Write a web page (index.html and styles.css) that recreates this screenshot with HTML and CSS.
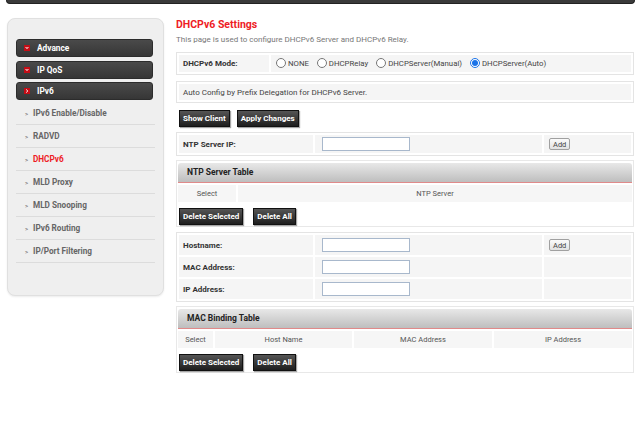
FILE: index.html
```html
<!DOCTYPE html>
<html lang="en">
<head>
    <meta charset="UTF-8">
    <title>DHCPv6 Settings</title>
    <link rel="stylesheet" href="styles.css">
</head>
<body>
    <div class="topbar"></div>
    <div class="page">
        <div class="sidebar">
            <div class="menu-btn">
                <svg class="menu-icon" viewBox="0 0 6 6"><rect width="6" height="6" fill="#c40d16"/><polyline points="1.6,2 3,3.6 4.4,2" fill="none" stroke="#fff" stroke-width="1"/></svg>
                Advance
            </div>
            <div class="menu-btn">
                <svg class="menu-icon" viewBox="0 0 6 6"><rect width="6" height="6" fill="#c40d16"/><polyline points="1.6,2 3,3.6 4.4,2" fill="none" stroke="#fff" stroke-width="1"/></svg>
                IP QoS
            </div>
            <div class="menu-btn">
                <svg class="menu-icon" viewBox="0 0 6 6"><rect width="6" height="6" fill="#c40d16"/><polyline points="2.2,1.5 3.8,3 2.2,4.5" fill="none" stroke="#fff" stroke-width="1"/></svg>
                IPv6
            </div>
            <ul class="submenu">
                <li>IPv6 Enable/Disable</li>
                <li>RADVD</li>
                <li class="active">DHCPv6</li>
                <li>MLD Proxy</li>
                <li>MLD Snooping</li>
                <li>IPv6 Routing</li>
                <li>IP/Port Filtering</li>
            </ul>
        </div>

        <div class="content">
            <h1>DHCPv6 Settings</h1>
            <p class="intro">This page is used to configure DHCPv6 Server and DHCPv6 Relay.</p>

            <table class="box mode-table">
                <tr>
                    <td class="label">DHCPv6 Mode:</td>
                    <td class="radios">
                        <label><input type="radio" name="mode">NONE</label>
                        <label><input type="radio" name="mode">DHCPRelay</label>
                        <label><input type="radio" name="mode">DHCPServer(Manual)</label>
                        <label><input type="radio" name="mode" checked>DHCPServer(Auto)</label>
                    </td>
                </tr>
            </table>

            <table class="box info-table">
                <tr><td>Auto Config by Prefix Delegation for DHCPv6 Server.</td></tr>
            </table>

            <div class="btn-row">
                <button class="btn">Show Client</button>
                <button class="btn">Apply Changes</button>
            </div>

            <table class="box form-table">
                <tr>
                    <td class="label">NTP Server IP:</td>
                    <td class="field"><input type="text"></td>
                    <td class="add"><button class="add-btn">Add</button></td>
                </tr>
            </table>

            <div class="list-box">
                <div class="list-head">NTP Server Table</div>
                <table class="list-table">
                    <tr><td class="sel-wide">Select</td><td>NTP Server</td></tr>
                </table>
                <div class="btn-row list-btns">
                    <button class="btn">Delete Selected</button>
                    <button class="btn">Delete All</button>
                </div>
            </div>

            <table class="box form-table host-table">
                <tr>
                    <td class="label">Hostname:</td>
                    <td class="field"><input type="text"></td>
                    <td class="add"><button class="add-btn">Add</button></td>
                </tr>
                <tr>
                    <td class="label">MAC Address:</td>
                    <td class="field"><input type="text"></td>
                    <td class="add"></td>
                </tr>
                <tr>
                    <td class="label">IP Address:</td>
                    <td class="field"><input type="text"></td>
                    <td class="add"></td>
                </tr>
            </table>

            <div class="list-box">
                <div class="list-head">MAC Binding Table</div>
                <table class="list-table">
                    <tr>
                        <td class="sel-narrow">Select</td>
                        <td class="col-host">Host Name</td>
                        <td class="col-mac">MAC Address</td>
                        <td>IP Address</td>
                    </tr>
                </table>
                <div class="btn-row list-btns">
                    <button class="btn">Delete Selected</button>
                    <button class="btn">Delete All</button>
                </div>
            </div>
        </div>
    </div>
</body>
</html>
```
FILE: styles.css
```css
body {
    margin: 0;
    font-family: Roboto, "Liberation Sans", Arial, sans-serif;
    color: #333;
    background: #fff;
}

.topbar {
    height: 3px;
    margin: 0 5px 0 6px;
    background: #3a3a3a;
    border: 1px solid #222;
    border-top: none;
    border-radius: 0 0 4px 4px;
}

.page {
    display: flex;
    gap: 12px;
    padding: 14px 6px 0 7px;
}

/* sidebar */
.sidebar {
    box-sizing: border-box;
    width: 157px;
    height: 278px;
    flex-shrink: 0;
    padding: 20px 10px 0 8px;
    background: #efefef;
    border: 1px solid #e0e0e0;
    border-radius: 8px;
    box-shadow: 0 1px 2px rgba(0, 0, 0, 0.08);
}

.menu-btn {
    display: flex;
    align-items: center;
    box-sizing: border-box;
    height: 18px;
    padding-left: 7px;
    background: linear-gradient(#4a4a4a, #363636);
    border: 1px solid #2c2c2c;
    border-radius: 3px;
    color: #fff;
    font-size: 8.3px;
    font-weight: bold;
}

.menu-btn + .menu-btn {
    margin-top: 3.5px;
}

.menu-icon {
    width: 6px;
    height: 6px;
    margin-right: 7px;
}

.submenu {
    list-style: none;
    margin: 2px 0 0;
    padding: 0;
    width: 139px;
}

.submenu li {
    height: 22px;
    line-height: 22px;
    padding-left: 9px;
    border-bottom: 1px solid #dcdcdc;
    color: #666;
    font-size: 8.2px;
    font-weight: bold;
}

.submenu li::before {
    content: ">";
    display: inline-block;
    width: 8px;
    font-size: 6px;
    color: #777;
}

.submenu li.active {
    color: #ee1c25;
}

/* main content */
.content {
    width: 458px;
}

h1 {
    margin: 0;
    font-size: 10.5px;
    line-height: 14px;
    color: #ee1c25;
}

.intro {
    margin: 2px 0 0;
    font-size: 8px;
    line-height: 11px;
    color: #777;
}

.box {
    width: 100%;
    border: 1px solid #e4e4e4;
    border-spacing: 2px;
    font-size: 8px;
}

.box td {
    background: #f5f5f5;
    padding: 0 4px;
}

.box td.label {
    font-weight: bold;
    color: #333;
}

.mode-table {
    margin-top: 7px;
}

.mode-table td {
    height: 17px;
}

.mode-table td.label {
    width: 82px;
}

.radios {
    font-size: 7.8px;
    color: #444;
}

.radios label {
    display: inline-flex;
    align-items: flex-end;
    margin-right: 5px;
}

.radios input {
    width: 10px;
    height: 10px;
    margin: 0 2px 0 1px;
    accent-color: #1a73e8;
}

.info-table {
    margin-top: 6px;
}

.info-table td {
    height: 16px;
    color: #444;
}

.btn-row {
    display: flex;
    gap: 7px;
    margin: 7px 0 0 3px;
}

.btn {
    height: 17px;
    padding: 0 3px;
    background: linear-gradient(#555, #1e1e1e);
    border: 1px solid #111;
    box-shadow: 1px 1px 1px rgba(0, 0, 0, 0.35);
    color: #fff;
    font-family: inherit;
    font-size: 8px;
    font-weight: bold;
}

.form-table {
    margin-top: 5px;
}

.form-table td {
    height: 18px;
}

.form-table td.label {
    width: 126px;
}

.form-table td.field {
    width: 216px;
    padding-left: 7px;
}

.form-table td.add {
    padding-left: 5px;
}

.form-table input {
    display: block;
    box-sizing: border-box;
    width: 88px;
    height: 14px;
    border: 1px solid #a8b8cc;
    background: #fff;
}

.add-btn {
    display: block;
    height: 12px;
    padding: 0 3px;
    background: linear-gradient(#fbfbfb, #e2e2e2);
    border: 1px solid #a0a0a0;
    border-radius: 2px;
    color: #444;
    font-family: inherit;
    font-size: 7.5px;
}

.host-table td {
    height: 20px;
}

.list-box {
    margin-top: 4px;
    padding: 2px 1px 0;
    border: 1px solid #e8e8e8;
}

.list-head {
    height: 19px;
    line-height: 19px;
    padding-left: 9px;
    background: linear-gradient(#e8e8e8, #bebebe);
    border-bottom: 1px solid #e08a8a;
    border-radius: 3px 3px 0 0;
    font-size: 8.5px;
    font-weight: bold;
    color: #222;
}

.list-table {
    width: 100%;
    margin-top: 2px;
    border-spacing: 0;
    font-size: 7.5px;
    color: #555;
}

.list-table td {
    height: 17px;
    padding: 0;
    text-align: center;
    background: #f6f6f6;
}

.list-table td + td {
    border-left: 2px solid #fff;
}

.sel-wide {
    width: 58px;
}

.sel-narrow {
    width: 35px;
}

.col-host {
    width: 137px;
}

.col-mac {
    width: 138px;
}

.list-btns {
    margin: 6px 0 1px 1px;
    gap: 10px;
}

.host-table {
    margin-top: 5px;
}
```
